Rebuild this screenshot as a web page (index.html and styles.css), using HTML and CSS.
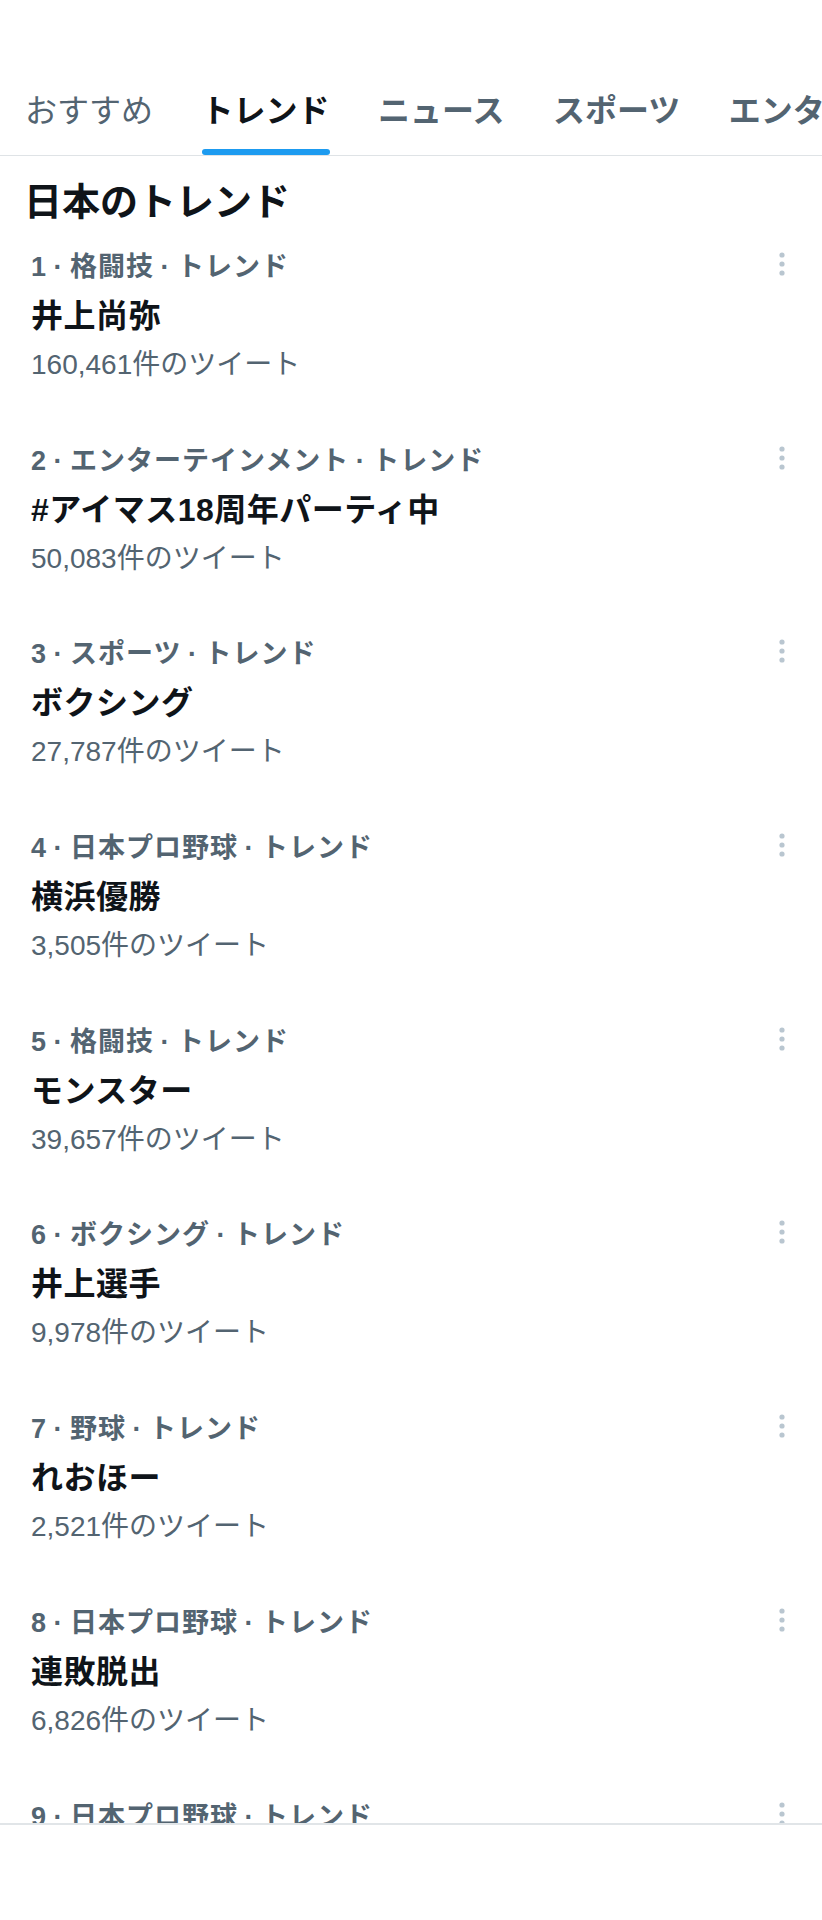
FILE: index.html
```html
<!DOCTYPE html>
<html lang="ja">
<head>
<meta charset="utf-8">
<title>トレンド</title>
<link rel="stylesheet" href="styles.css">
</head>
<body>
<div class="page">
  <nav class="tabs">
    <div class="tab tab-light"><span class="tab-label">おすすめ</span><span class="tab-bar"></span></div>
    <div class="tab tab-active"><span class="tab-label">トレンド</span><span class="tab-bar"></span></div>
    <div class="tab"><span class="tab-label">ニュース</span><span class="tab-bar"></span></div>
    <div class="tab"><span class="tab-label">スポーツ</span><span class="tab-bar"></span></div>
    <div class="tab"><span class="tab-label">エンタメ</span><span class="tab-bar"></span></div>
  </nav>

  <h1 class="heading">日本のトレンド</h1>

  <ul class="trend-list">
    <li class="trend">
      <div class="trend-body">
        <div class="trend-meta">1 · 格闘技 · トレンド</div>
        <div class="trend-title">井上尚弥</div>
        <div class="trend-count">160,461件のツイート</div>
      </div>
      <svg class="more" width="10" height="24" viewBox="0 0 10 24"><circle cx="5" cy="3" r="2.6"/><circle cx="5" cy="12" r="2.6"/><circle cx="5" cy="21" r="2.6"/></svg>
    </li>
    <li class="trend">
      <div class="trend-body">
        <div class="trend-meta">2 · エンターテインメント · トレンド</div>
        <div class="trend-title">#アイマス18周年パーティ中</div>
        <div class="trend-count">50,083件のツイート</div>
      </div>
      <svg class="more" width="10" height="24" viewBox="0 0 10 24"><circle cx="5" cy="3" r="2.6"/><circle cx="5" cy="12" r="2.6"/><circle cx="5" cy="21" r="2.6"/></svg>
    </li>
    <li class="trend">
      <div class="trend-body">
        <div class="trend-meta">3 · スポーツ · トレンド</div>
        <div class="trend-title">ボクシング</div>
        <div class="trend-count">27,787件のツイート</div>
      </div>
      <svg class="more" width="10" height="24" viewBox="0 0 10 24"><circle cx="5" cy="3" r="2.6"/><circle cx="5" cy="12" r="2.6"/><circle cx="5" cy="21" r="2.6"/></svg>
    </li>
    <li class="trend">
      <div class="trend-body">
        <div class="trend-meta">4 · 日本プロ野球 · トレンド</div>
        <div class="trend-title">横浜優勝</div>
        <div class="trend-count">3,505件のツイート</div>
      </div>
      <svg class="more" width="10" height="24" viewBox="0 0 10 24"><circle cx="5" cy="3" r="2.6"/><circle cx="5" cy="12" r="2.6"/><circle cx="5" cy="21" r="2.6"/></svg>
    </li>
    <li class="trend">
      <div class="trend-body">
        <div class="trend-meta">5 · 格闘技 · トレンド</div>
        <div class="trend-title">モンスター</div>
        <div class="trend-count">39,657件のツイート</div>
      </div>
      <svg class="more" width="10" height="24" viewBox="0 0 10 24"><circle cx="5" cy="3" r="2.6"/><circle cx="5" cy="12" r="2.6"/><circle cx="5" cy="21" r="2.6"/></svg>
    </li>
    <li class="trend">
      <div class="trend-body">
        <div class="trend-meta">6 · ボクシング · トレンド</div>
        <div class="trend-title">井上選手</div>
        <div class="trend-count">9,978件のツイート</div>
      </div>
      <svg class="more" width="10" height="24" viewBox="0 0 10 24"><circle cx="5" cy="3" r="2.6"/><circle cx="5" cy="12" r="2.6"/><circle cx="5" cy="21" r="2.6"/></svg>
    </li>
    <li class="trend">
      <div class="trend-body">
        <div class="trend-meta">7 · 野球 · トレンド</div>
        <div class="trend-title">れおほー</div>
        <div class="trend-count">2,521件のツイート</div>
      </div>
      <svg class="more" width="10" height="24" viewBox="0 0 10 24"><circle cx="5" cy="3" r="2.6"/><circle cx="5" cy="12" r="2.6"/><circle cx="5" cy="21" r="2.6"/></svg>
    </li>
    <li class="trend">
      <div class="trend-body">
        <div class="trend-meta">8 · 日本プロ野球 · トレンド</div>
        <div class="trend-title">連敗脱出</div>
        <div class="trend-count">6,826件のツイート</div>
      </div>
      <svg class="more" width="10" height="24" viewBox="0 0 10 24"><circle cx="5" cy="3" r="2.6"/><circle cx="5" cy="12" r="2.6"/><circle cx="5" cy="21" r="2.6"/></svg>
    </li>
    <li class="trend">
      <div class="trend-body">
        <div class="trend-meta">9 · 日本プロ野球 · トレンド</div>
      </div>
      <svg class="more" width="10" height="24" viewBox="0 0 10 24"><circle cx="5" cy="3" r="2.6"/><circle cx="5" cy="12" r="2.6"/><circle cx="5" cy="21" r="2.6"/></svg>
    </li>
  </ul>
</div>
</body>
</html>
```

FILE: styles.css
```css
html, body {
  margin: 0;
  padding: 0;
  background: #ffffff;
}

body {
  font-family: "Liberation Sans", "Noto Sans CJK JP", sans-serif;
  color: #0f1419;
  width: 822px;
  overflow: hidden;
}

.page {
  width: 822px;
}

.tabs {
  display: flex;
  gap: 48.5px;
  padding: 95px 0 0 25px;
  border-bottom: 1px solid #dfe3e6;
  white-space: nowrap;
  overflow: hidden;
}

.tab {
  display: flex;
  flex-direction: column;
  flex-shrink: 0;
}

.tab-label {
  font-size: 32px;
  line-height: 32px;
  font-weight: 700;
  color: #536471;
}

.tab-light .tab-label {
  font-weight: 400;
}

.tab-active .tab-label {
  color: #0f1419;
}

.tab-bar {
  height: 6px;
  margin-top: 22px;
  border-radius: 3px;
  background: transparent;
}

.tab-active .tab-bar {
  background: #1d9bf0;
}

.heading {
  margin: 27px 0 0 0;
  padding-left: 24px;
  font-size: 38px;
  line-height: 38px;
  font-weight: 700;
  color: #0f1419;
}

.trend-list {
  list-style: none;
  margin: 18px 0 0 0;
  padding: 0;
  height: 1584px;
  overflow: hidden;
  border-bottom: 2px solid #e1e5e8;
}

.trend {
  display: flex;
  align-items: flex-start;
  padding: 16px 35px 54.7px 31px;
}

.trend-body {
  flex: 1;
  min-width: 0;
}

.trend-meta {
  font-size: 27px;
  line-height: 25px;
  font-weight: 700;
  letter-spacing: 1px;
  word-spacing: -2px;
  color: #536471;
}

.trend-title {
  margin-top: 21px;
  font-size: 32px;
  line-height: 31px;
  font-weight: 700;
  letter-spacing: 0.5px;
  color: #0f1419;
}

.trend-count {
  margin-top: 19px;
  font-size: 28px;
  line-height: 27px;
  font-weight: 400;
  color: #536471;
}

.more {
  flex-shrink: 0;
  margin-top: -3px;
  fill: #b9c6d0;
}
```
